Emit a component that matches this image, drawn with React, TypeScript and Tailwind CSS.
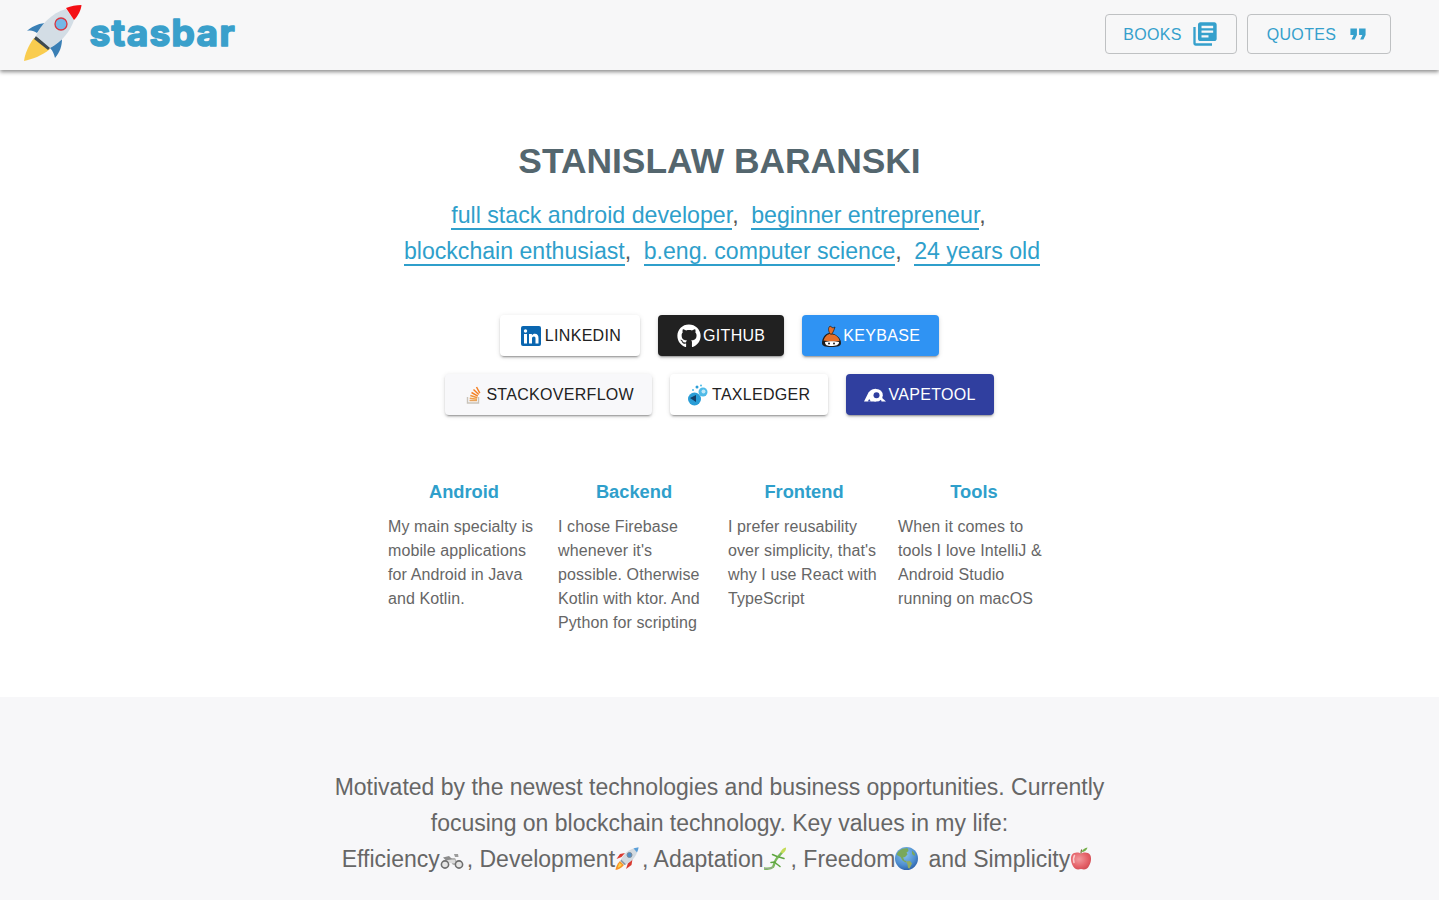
import React from "react";
import { FaGithub } from "react-icons/fa";
import { MdLibraryBooks, MdFormatQuote } from "react-icons/md";

const Rocket = () => (
  <svg width="60" height="60" viewBox="23 3 60 60" className="shrink-0">
    <path d="M34 38 C28 46 25 54 24 61 C32 59 42 56 50 49 Z" fill="#f9cc4f" />
    <path d="M45 23 C37 24 31 27 27 31 C31 30 34 31 37 33 Z" fill="#3a7fb5" />
    <path d="M62 39 C62 46 60 52 55 58 C54 54 53 51 50 48 Z" fill="#3a7fb5" />
    <path d="M34 39 L36 36 L51 47 L48 50 Z" fill="#3f4a4f" />
    <path d="M36 36 C40 25 52 13 66 9 L74 20 C71 30 62 42 50 48 Z" fill="#d3dde5" />
    <path d="M66 8 C71 6 76 5 81.500 5 C81 10 78 16 74 20 Z" fill="#f40f14" />
    <circle cx="61" cy="24" r="6" fill="#74b7e6" stroke="#d8353f" strokeWidth="1.300" />
  </svg>
);

const LinkedIn = () => (
  <svg width="22" height="22" viewBox="0 0 22 22" className="shrink-0">
    <rect x="1" y="1" width="20" height="20" rx="2" fill="#0a66b0" />
    <circle cx="5.500" cy="6" r="1.700" fill="#fff" />
    <rect x="4" y="9" width="3" height="9.500" fill="#fff" />
    <path d="M9 9h2.900v1.400c.6-1 1.700-1.600 3-1.600 2.600 0 3.600 1.600 3.600 4.300v5.400h-3v-4.900c0-1.300-.4-2.200-1.600-2.200s-1.900.9-1.900 2.200v4.900H9z" fill="#fff" />
  </svg>
);

const Keybase = () => (
  <svg width="21" height="22" viewBox="0 0 21 22" className="shrink-0">
    <path d="M1 18 C1 13 4 9 8 8 L13 9 C17 11 20 14 20 18 C20 21 17 22 10 22 C4 22 1 21 1 18 Z" fill="#1d1d1d" />
    <path d="M2.500 15.500 C4 11 7 9 9 9 L14 10 C17 12 18.500 14 18.500 16 L10 16.500 Z" fill="#e5702a" />
    <path d="M9 9 C7 5 7 3 9 1 L12 3 L14 2 L13 5 L11 9 Z" fill="#e5702a" stroke="#1d1d1d" strokeWidth=".7" />
    <path d="M4 17 C8 16 14 16 18 17 C18 20 15 21 10 21 C6 21 4 20 4 17 Z" fill="#fff" />
    <circle cx="8" cy="18.500" r="1" fill="#222" />
    <circle cx="13" cy="18.500" r="1" fill="#222" />
  </svg>
);

const StackOverflow = () => (
  <svg width="16" height="18" viewBox="0 0 16 18" className="shrink-0">
    <path d="M1.500 11v6h11v-6" fill="none" stroke="#c9c3ba" strokeWidth="1.400" />
    <path d="M3.500 14.500h7.500" stroke="#e8a35a" strokeWidth="1.500" />
    <path d="M3.700 12.200l7.300 1" stroke="#f0a04a" strokeWidth="1.500" />
    <path d="M4.300 9.500l7 2.200" stroke="#f2953a" strokeWidth="1.500" />
    <path d="M5.500 6.500l6.300 3.600" stroke="#f48024" strokeWidth="1.500" />
    <path d="M7.500 3.500l5.200 5" stroke="#f48024" strokeWidth="1.500" />
    <path d="M10.500 1l3.300 6.200" stroke="#f48024" strokeWidth="1.500" />
  </svg>
);

const TaxLedger = () => (
  <svg width="22" height="22" viewBox="0 0 22 22" className="shrink-0">
    <circle cx="6.500" cy="15" r="6.500" fill="#2a9dd6" />
    <path d="M2 14l6-3v7z" fill="#123f68" />
    <circle cx="15" cy="8" r="4.500" fill="#4fbbe8" />
    <circle cx="15.500" cy="7.500" r="2" fill="#bfe7f7" />
    <circle cx="9" cy="3" r="1.500" fill="#2a9dd6" />
    <circle cx="13" cy="1.500" r="1" fill="#4fbbe8" />
    <circle cx="5" cy="6" r="1" fill="#4fbbe8" />
  </svg>
);

const Vapetool = () => (
  <svg width="22" height="14" viewBox="0 0 22 14" className="shrink-0">
    <path d="M0 13.500 L4.500 4.500 C6.500 1.800 9.500 .8 12 .8 L12 13.500 Z" fill="#fff" />
    <path d="M16 8 L22 13.500 H17.500 Z" fill="#fff" />
    <circle cx="12.500" cy="7.200" r="6.300" fill="#fff" />
    <circle cx="12.500" cy="7.200" r="3" fill="#303f9f" />
    <path d="M3.800 13.600 L5.200 11 L6.800 13.600 Z" fill="#303f9f" />
  </svg>
);

const emojiCls = "shrink-0 inline-block align-[-2.500px]";

const Moto = () => (
  <svg width="24" height="23" viewBox="0 0 24 23" className={emojiCls}>
    <path d="M5 18 L9 11 H15 L19 18 H13 L10 14 Z" fill="#b5b5b5" />
    <path d="M3 10.500 L9 9 L12 12 L6 13.500 Z" fill="#8c8c8c" />
    <path d="M14 7 H18 L18.500 10 L15 10 Z" fill="#9c9c9c" />
    <rect x="8" y="13" width="7" height="3" fill="#dcdcdc" />
    <circle cx="5" cy="17.500" r="3.600" fill="#e6e6e6" stroke="#6e6e6e" strokeWidth="1.600" />
    <circle cx="19" cy="17.500" r="3.600" fill="#e6e6e6" stroke="#6e6e6e" strokeWidth="1.600" />
  </svg>
);

const RocketEmoji = () => (
  <svg width="24" height="23" viewBox="0 0 24 23" className={emojiCls}>
    <path d="M5 14C2 17 1 20 .5 23c3-.5 6-2 8.500-5z" fill="#f79329" />
    <path d="M4.500 16C3.500 18 3 19.500 2.800 20.800c1.500-.5 3-1.500 4.200-3z" fill="#fcd34d" />
    <path d="M6.500 10 1.500 12l3.500-5 5-1zM13 16l-2 6 5.500-4 1-6z" fill="#d93a30" />
    <path d="M5.500 14C7.500 8 13 3 18.500 1.500l3.500 4c-1.500 5-7 10.500-12.500 12.500z" fill="#d3dae0" />
    <path d="M5.500 14l4 4 1.500-.7-4.800-4.800z" fill="#8a97a3" />
    <path d="M18.500 1.500c2-.8 3.800-1.200 5-1.300-.1 1.500-.5 3.300-1.500 5.300z" fill="#5b9fd8" />
    <circle cx="14.500" cy="8" r="2.500" fill="#4f8fc9" stroke="#7d8b98" strokeWidth="1" />
  </svg>
);

const Lizard = () => (
  <svg width="24" height="23" viewBox="0 0 24 23" className={emojiCls}>
    <path d="M0 21.500c4 .5 7.500 0 9-1.500 1.500-2 1-4 2.500-6.500 1.500-3 4-5 6-7.500" fill="none" stroke="#79b95a" strokeWidth="2.400" strokeLinecap="round" />
    <path d="M0 21.500c4 .5 7.500 0 9-1.500" fill="none" stroke="#9ba69a" strokeWidth="1" strokeLinecap="round" />
    <path d="M16.500 5c1-2.300 3-4 5.500-4.500.5 2-1 4.500-3.500 6z" fill="#c4dc58" />
    <path d="M13 9.500 L8.500 7.500 M15 10 L20 11.500 M11 15 L7 15.500 M11.500 16 L16 19.500" stroke="#5da53f" strokeWidth="1.500" fill="none" strokeLinecap="round" />
  </svg>
);

const Globe = () => (
  <svg width="23" height="23" viewBox="0 0 23 23" className={emojiCls}>
    <defs>
      <radialGradient id="g-ocean" cx="42%" cy="32%" r="72%">
        <stop offset="0%" stopColor="#8cc4ee" />
        <stop offset="65%" stopColor="#4f8fd0" />
        <stop offset="100%" stopColor="#2b5fa8" />
      </radialGradient>
    </defs>
    <circle cx="11.500" cy="11.500" r="11.500" fill="url(#g-ocean)" />
    <path d="M4 4c3-2.500 6.500-3 9-2.500l.5 2.500-2 1.500 1 2-2.500 2.500-2 .5 1.500 3 2 .5-1 1.500-3-2-2-3.500-3.500-2C1.500 7 2.500 5.500 4 4z" fill="#79a85a" />
    <path d="M11 14.500l4-.5 2 2.500-2.500 5-1.500-.5-.5-3.500z" fill="#93ad5f" />
    <path d="M17 3.500l3 3.500-.5 2-2.500-2z" fill="#79a85a" />
  </svg>
);

const Apple = () => (
  <svg width="22" height="23" viewBox="0 0 22 23" className={emojiCls}>
    <defs>
      <radialGradient id="g-apple" cx="40%" cy="40%" r="70%">
        <stop offset="0%" stopColor="#f29a9e" />
        <stop offset="60%" stopColor="#e5646b" />
        <stop offset="100%" stopColor="#d04850" />
      </radialGradient>
    </defs>
    <path d="M11 6.500C9 5.200 4 4.500 1.800 8c-1.700 3.300-.7 8.500 1.800 12 1.500 2.200 3.500 3 7.400 2 3.900 1 5.900.2 7.400-2 2.500-3.500 3.500-8.700 1.800-12C18 4.500 13 5.200 11 6.500z" fill="url(#g-apple)" />
    <path d="M4.500 8.500c-1.200 2-1.200 4.500-.5 7" stroke="#f9c9cb" strokeWidth="1.500" fill="none" strokeLinecap="round" />
    <path d="M11 6.500c0-1.500.2-2.800.7-4" stroke="#7a6a3a" strokeWidth="1.200" fill="none" />
    <path d="M11.500 5c1-2.500 3.500-4.300 6-4.500C17 3 14.500 5 11.500 5z" fill="#74b04a" />
  </svg>
);

const Comma = () => <span className="mr-[12.500px]">,</span>;

const Link = ({ children }: { children: React.ReactNode }) => (
  <span className="text-[#2f9fcb] border-b-2 border-[#2f9fcb]">{children}</span>
);

const elev = "shadow-[0_3px_1px_-2px_rgba(0,0,0,0.2),0_2px_2px_0_rgba(0,0,0,0.14),0_1px_5px_0_rgba(0,0,0,0.12)]";

const Social = ({ icon, label, cls }: { icon: React.ReactNode; label: string; cls: string }) => (
  <div className={`h-[41px] rounded-[4px] flex items-center text-[16px] tracking-[0.3px] ${elev} ${cls}`}>
    {icon}
    <span>{label}</span>
  </div>
);

const columns = [
  { t: "Android", lines: ["My main specialty is", "mobile applications", "for Android in Java", "and Kotlin."] },
  { t: "Backend", lines: ["I chose Firebase", "whenever it's", "possible. Otherwise", "Kotlin with ktor. And", "Python for scripting"] },
  { t: "Frontend", lines: ["I prefer reusability", "over simplicity, that's", "why I use React with", "TypeScript"] },
  { t: "Tools", lines: ["When it comes to", "tools I love IntelliJ &", "Android Studio", "running on macOS"] },
];

export default function App() {
  return (
    <div className="h-[900px] overflow-hidden bg-white font-['Liberation_Sans',Arial,sans-serif]">
      <header className="relative z-10 h-[70px] pb-[2px] bg-[#f7f7f8] flex items-center justify-between pl-[23px] pr-[48px] shadow-[0_2px_4px_0_rgba(0,0,0,0.45)]">
        <div className="flex items-center gap-[6px] mb-[2px]">
          <Rocket />
          <svg width="150" height="44" viewBox="0 0 150 44" className="shrink-0">
            <text x="0.500" y="35" textLength="145" lengthAdjust="spacing" fontFamily="Inter, sans-serif" fontWeight="700" fontSize="37" fill="#3aa0cb" stroke="#3aa0cb" strokeWidth="1.700" strokeLinejoin="round">stasbar</text>
          </svg>
        </div>
        <div className="flex items-center gap-[10px] text-[16px] tracking-[0.35px] text-[#35a0cc]">
          <div className="w-[132px] h-[40px] border border-[#bfc1c3] rounded-[4px] flex items-center justify-center gap-[9px]">
            <span className="pt-[1px]">BOOKS</span>
            <MdLibraryBooks size={28} color="#35a0cc" />
          </div>
          <div className="w-[144px] h-[40px] border border-[#bfc1c3] rounded-[4px] flex items-center justify-center gap-[9px]">
            <span className="pt-[1px]">QUOTES</span>
            <MdFormatQuote size={26} color="#35a0cc" />
          </div>
        </div>
      </header>

      <main className="pt-[64px] flex flex-col items-center">
        <h1 className="text-[35.400px] leading-[54px] font-bold text-[#54666e]">STANISLAW BARANSKI</h1>
        <div className="mt-[9px] text-[23.100px] leading-[36px] text-center text-[#555]">
          <div className="text-[23.200px] mr-[2px]"><Link>full stack android developer</Link><Comma /><Link>beginner entrepreneur</Link>,</div>
          <div className="ml-[5px]"><Link>blockchain enthusiast</Link><Comma /><Link>b.eng. computer science</Link><Comma /><Link>24 years old</Link></div>
        </div>

        <div className="mt-[46px] flex flex-col items-center gap-[18px]">
          <div className="flex gap-[18px]">
            <Social icon={<LinkedIn />} label="LINKEDIN" cls="pl-[20px] pr-[19px] gap-[3px] bg-white text-[#222]" />
            <Social icon={<FaGithub size={24} color="#fff" />} label="GITHUB" cls="px-[19px] gap-[2px] bg-[#212121] text-white" />
            <Social icon={<Keybase />} label="KEYBASE" cls="px-[19px] gap-[1px] bg-[#2f93f3] text-white" />
          </div>
          <div className="flex gap-[18px]">
            <Social icon={<StackOverflow />} label="STACKOVERFLOW" cls="pl-[21px] pr-[18px] gap-[4px] bg-[#f8f8fa] text-[#222]" />
            <Social icon={<TaxLedger />} label="TAXLEDGER" cls="px-[18px] gap-[2px] bg-white text-[#222]" />
            <Social icon={<Vapetool />} label="VAPETOOL" cls="px-[18px] gap-[2px] bg-[#303f9f] text-white" />
          </div>
        </div>

        <div className="mt-[65px] mr-[1px] flex">
          {columns.map((c) => (
            <div key={c.t} className="w-[170px] px-[9px]">
              <h3 className="text-center text-[18.300px] leading-[24px] font-bold text-[#2f9fcb]">{c.t}</h3>
              <div className="mt-[11px] text-[16px] leading-[24px] tracking-[0.1px] text-[#666]">
                {c.lines.map((l) => (
                  <div key={l} className="whitespace-nowrap">{l}</div>
                ))}
              </div>
            </div>
          ))}
        </div>
      </main>

      <section className="mt-[62px] bg-[#f7f7f9] pt-[72px] pb-[72px] text-center text-[23px] leading-[36px] text-[#666]">
        <div>Motivated by the newest technologies and business opportunities. Currently</div>
        <div>focusing on blockchain technology. Key values in my life:</div>
        <div className="whitespace-nowrap pr-[5px]">
          Efficiency<span className="mr-[3px]"><Moto /></span>, Development<span className="mr-[3px]"><RocketEmoji /></span>, Adaptation<span className="mr-[3px]"><Lizard /></span>, Freedom<span className="mr-[10px]"><Globe /></span>and Simplicity<Apple />
        </div>
      </section>
    </div>
  );
}
